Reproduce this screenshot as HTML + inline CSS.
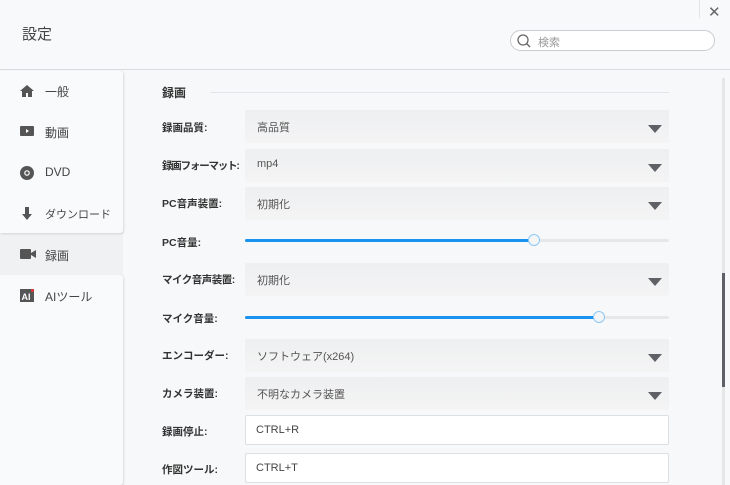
<!DOCTYPE html>
<html><head><meta charset="utf-8"><style>
*{margin:0;padding:0;box-sizing:border-box}
body{width:730px;height:485px;overflow:hidden;background:#f7f8f9;font-family:"Liberation Sans","Noto Sans CJK JP",sans-serif;position:relative;color:#333}
.hdr{position:absolute;left:0;top:0;width:730px;height:70px;background:#f8f9fa;border-bottom:1px solid #d8dadd}
.title{position:absolute;left:22px;top:23px;font-size:15px;color:#444}
.x{position:absolute;left:708px;top:3px;font-size:15px;color:#666;font-weight:300}
.xl{position:absolute;left:699px;top:0;width:1px;height:18px;background:#e4e4e4}
.search{position:absolute;left:510px;top:30px;width:205px;height:21px;border:1px solid #c9ccd1;border-radius:11px;background:#fff}
.search span{position:absolute;left:27px;top:3px;font-size:11px;color:#999}
.side{position:absolute;left:0;top:71px;width:123px;height:414px;background:#f0f1f2}
.card{position:absolute;left:0;width:123px;background:#f9fafb;box-shadow:1px 1px 2px rgba(0,0,0,.12);border-radius:0 3px 3px 0}
.it{position:absolute;left:0;width:123px;height:41px;font-size:12px;color:#444}
.it .t{position:absolute;left:45px;top:12px}
.it svg{position:absolute;left:20px;top:13px}
.sec{position:absolute;left:162px;top:84px;font-size:12px;font-weight:bold}
.secl{position:absolute;left:210px;top:92px;width:459px;height:1px;background:#e3e5e8}
.lb{position:absolute;left:162px;font-size:10.5px;font-weight:bold;color:#333;white-space:nowrap}
.sel{position:absolute;left:245px;width:424px;height:33px;background:linear-gradient(#eeeff0,#f4f4f5);border-radius:2px}
.sel span{position:absolute;left:12px;top:9px;font-size:11px;color:#555}
.sel i{position:absolute;right:7px;top:15px;border-left:7px solid transparent;border-right:7px solid transparent;border-top:8px solid #5f6166}
.inp{position:absolute;left:245px;width:424px;height:30px;background:#fff;border:1px solid #dcdfe3;border-radius:2px}
.inp span{position:absolute;left:10px;top:8px;font-size:11px;color:#444}
.tr{position:absolute;left:245px;width:424px;height:3px;background:#e6e7e9;border-radius:2px}
.fill{position:absolute;left:0;top:0;height:3px;background:#1a92f0;border-radius:2px}
.knob{position:absolute;top:-5px;width:12px;height:12px;border-radius:50%;background:#f3f5f7;border:1px solid #8ec8f5}
.sb{position:absolute;left:722px;top:78px;width:3px;height:407px;background:#e5e6e8}
.th{position:absolute;left:722px;top:273px;width:3px;height:114px;background:#5d6066}
</style></head><body>
<div class="hdr"><div class="title">設定</div><div class="xl"></div><div class="x">✕</div>
<div class="search"><svg width="16" height="16" style="position:absolute;left:5px;top:2px"><circle cx="7" cy="7" r="5" fill="none" stroke="#666" stroke-width="1.3"/><line x1="10.5" y1="10.5" x2="14" y2="14" stroke="#666" stroke-width="1.4"/></svg><span>検索</span></div></div>
<div class="side">
<div class="card" style="top:0;height:162px"></div>
<div class="card" style="top:204px;height:210px"></div>
<div class="it" style="top:0"><svg width="14" height="13"><path d="M7 1L0 7h2v6h4V9h2v4h4V7h2z" fill="#555"/></svg><span class="t">一般</span></div>
<div class="it" style="top:41px"><svg width="14" height="12"><rect x="0" y="1" width="14" height="10" rx="1" fill="#555"/><path d="M6 4v4l3-2z" fill="#fff"/></svg><span class="t">動画</span></div>
<div class="it" style="top:82px"><svg width="14" height="14"><circle cx="7" cy="7" r="7" fill="#555"/><circle cx="7" cy="7" r="2.2" fill="none" stroke="#fff" stroke-width="1.2"/></svg><span class="t">DVD</span></div>
<div class="it" style="top:123px"><svg width="14" height="14"><path d="M5 0h4v7h3l-5 6-5-6h3z" fill="#555"/></svg><span class="t" style="font-size:11px">ダウンロード</span></div>
<div class="it" style="top:164px"><svg width="16" height="12"><rect x="0" y="1" width="11" height="10" rx="1" fill="#555"/><path d="M11 5l5-3v8l-5-3z" fill="#555"/></svg><span class="t">録画</span></div>
<div class="it" style="top:205px"><svg width="14" height="13"><rect x="0" y="0" width="14" height="13" fill="#555"/><text x="1.5" y="11" font-size="9" font-weight="bold" fill="#fff" font-family="Liberation Sans">AI</text><circle cx="12.5" cy="1.5" r="1.5" fill="#e33"/></svg><span class="t">AIツール</span></div>
</div>
<div class="sec">録画</div><div class="secl"></div>
<div class="lb" style="top:120px">録画品質:</div><div class="sel" style="top:110px"><span>高品質</span><i></i></div>
<div class="lb" style="top:158px;letter-spacing:-1.2px">録画フォーマット:</div><div class="sel" style="top:149px"><span>mp4</span><i></i></div>
<div class="lb" style="top:196px">PC音声装置:</div><div class="sel" style="top:187px"><span>初期化</span><i></i></div>
<div class="lb" style="top:235px">PC音量:</div><div class="tr" style="top:239px"><div class="fill" style="width:289px"></div><div class="knob" style="left:283px"></div></div>
<div class="lb" style="top:272px;letter-spacing:-0.5px">マイク音声装置:</div><div class="sel" style="top:263px"><span>初期化</span><i></i></div>
<div class="lb" style="top:311px">マイク音量:</div><div class="tr" style="top:316px"><div class="fill" style="width:354px"></div><div class="knob" style="left:348px"></div></div>
<div class="lb" style="top:348px">エンコーダー:</div><div class="sel" style="top:339px"><span>ソフトウェア(x264)</span><i></i></div>
<div class="lb" style="top:386px">カメラ装置:</div><div class="sel" style="top:377px"><span>不明なカメラ装置</span><i></i></div>
<div class="lb" style="top:424px">録画停止:</div><div class="inp" style="top:415px"><span>CTRL+R</span></div>
<div class="lb" style="top:462px">作図ツール:</div><div class="inp" style="top:453px"><span>CTRL+T</span></div>
<div class="sb"></div><div class="th"></div>
</body></html>
